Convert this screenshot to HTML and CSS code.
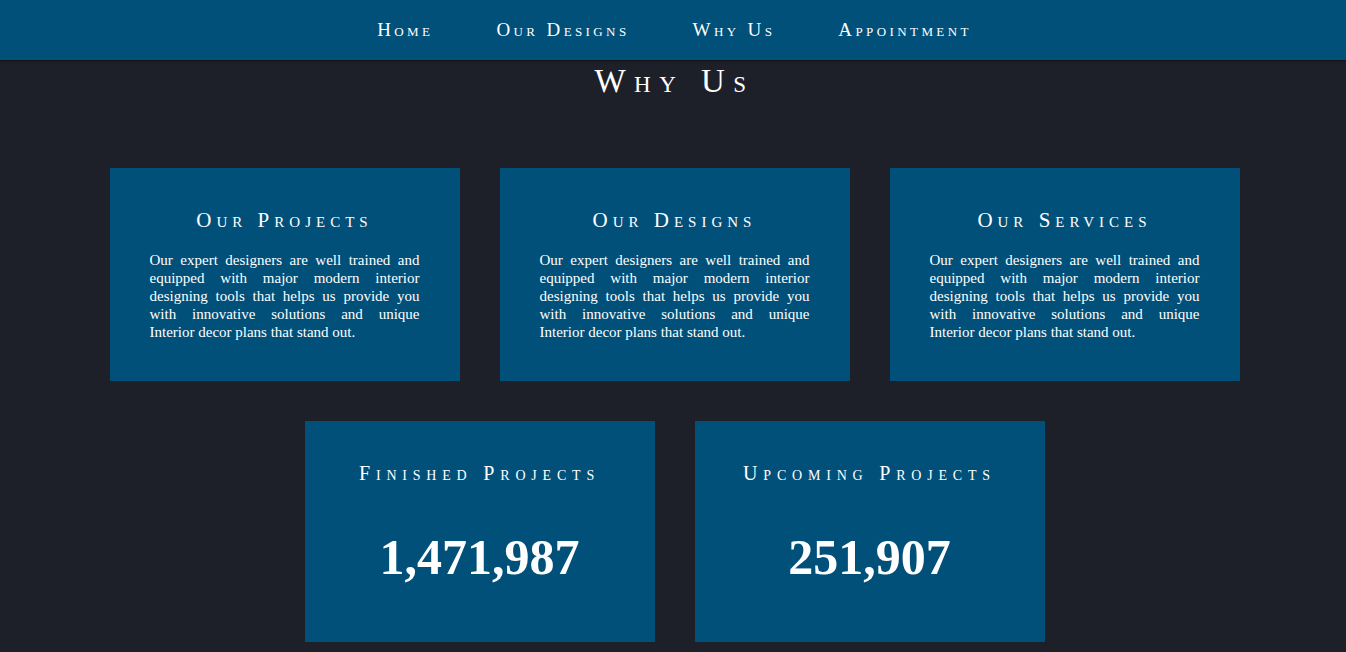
FILE: index.html
```html
<!DOCTYPE html>
<html>
<head>
<meta charset="utf-8">
<link rel="stylesheet" href="styles.css">
</head>
<body>
<nav class="nav">
  <a class="nav-link" href="#">Home</a>
  <a class="nav-link" href="#">Our Designs</a>
  <a class="nav-link" href="#">Why Us</a>
  <a class="nav-link" href="#">Appointment</a>
</nav>
<section class="why">
  <h1 class="why-title">Why Us</h1>
  <div class="row">
    <div class="card">
      <h2 class="card-title">Our Projects</h2>
      <p class="card-text">Our expert designers are well trained and equipped with major modern interior designing tools that helps us provide you with innovative solutions and unique Interior decor plans that stand out.</p>
    </div>
    <div class="card">
      <h2 class="card-title">Our Designs</h2>
      <p class="card-text">Our expert designers are well trained and equipped with major modern interior designing tools that helps us provide you with innovative solutions and unique Interior decor plans that stand out.</p>
    </div>
    <div class="card">
      <h2 class="card-title">Our Services</h2>
      <p class="card-text">Our expert designers are well trained and equipped with major modern interior designing tools that helps us provide you with innovative solutions and unique Interior decor plans that stand out.</p>
    </div>
  </div>
  <div class="row">
    <div class="card stat">
      <h2 class="card-title">Finished Projects</h2>
      <div class="stat-num">1,471,987</div>
    </div>
    <div class="card stat">
      <h2 class="card-title">Upcoming Projects</h2>
      <div class="stat-num">251,907</div>
    </div>
  </div>
</section>
</body>
</html>
```
FILE: styles.css
```css
html, body {
  margin: 0;
  padding: 0;
}
body {
  background: #1e2029;
  color: #ffffff;
  font-family: "Liberation Serif", "Times New Roman", serif;
  overflow: hidden;
}
.nav {
  height: 60px;
  background: #00507a;
  display: flex;
  justify-content: center;
  align-items: center;
  gap: 63px;
  box-shadow: 0 1px 2px rgba(0,0,0,0.5);
  padding-left: 3px;
}
.nav-link {
  color: #ffffff;
  text-decoration: none;
  font-variant: small-caps;
  font-size: 19px;
  letter-spacing: 3.4px;
  font-weight: normal;
}
.why {
  display: flex;
  flex-direction: column;
  align-items: center;
  padding-left: 3px;
}
.why-title {
  margin: 0;
  font-weight: normal;
  font-variant: small-caps;
  font-size: 33px;
  letter-spacing: 8.5px;
  line-height: 40px;
  margin-top: 1px;
  margin-bottom: 67px;
  padding-left: 0;
}
.row {
  display: flex;
  gap: 40px;
  margin-bottom: 40px;
}
.card {
  width: 350px;
  height: 213px;
  box-sizing: border-box;
  background: #00507a;
  padding: 38px 40px 0;
}
.card-title {
  margin: 0 0 17px;
  text-align: center;
  font-weight: normal;
  font-variant: small-caps;
  font-size: 21px;
  letter-spacing: 5px;
  line-height: 28px;
}
.card-text {
  margin: 0;
  font-size: 15px;
  line-height: 18px;
  text-align: justify;
}
.stat {
  height: 221px;
  padding-top: 38px;
}
.stat .card-title {
  font-size: 20px;
  letter-spacing: 5.8px;
  margin-bottom: 42px;
}
.stat-num {
  text-align: center;
  font-weight: bold;
  font-size: 50px;
  line-height: 56px;
}
```
